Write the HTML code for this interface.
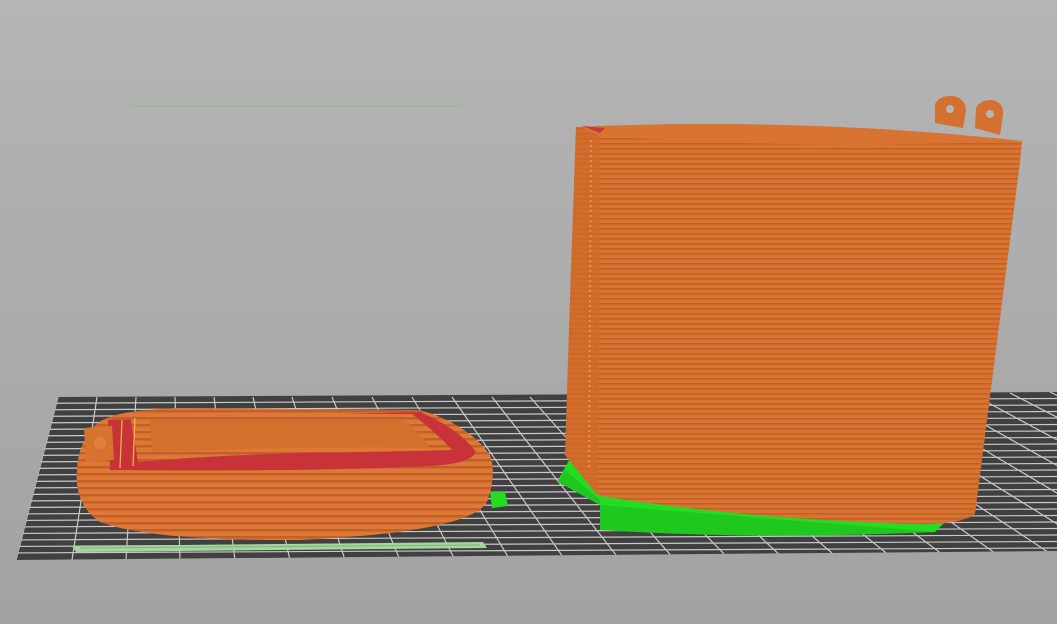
<!DOCTYPE html>
<html><head><style>html,body{margin:0;padding:0;width:1057px;height:624px;overflow:hidden;background:#aaa}</style></head>
<body>
<svg width="1057" height="624" viewBox="0 0 1057 624" xmlns="http://www.w3.org/2000/svg">
<defs>
<linearGradient id="bg" x1="0" y1="0" x2="0" y2="1">
<stop offset="0" stop-color="#b5b5b5"/><stop offset="1" stop-color="#a2a2a2"/></linearGradient>
<pattern id="st" width="10" height="5" patternUnits="userSpaceOnUse">
<rect width="10" height="5" fill="#d8742f"/><rect y="3" width="10" height="1.6" fill="#c2612a"/></pattern>
<pattern id="st2" width="10" height="7" patternUnits="userSpaceOnUse">
<rect width="10" height="7" fill="#de7834"/><rect y="4" width="10" height="2.5" fill="#c0602a"/></pattern>
<clipPath id="bedc"><path d="M58,397 L1057,392 L1057,551 L16,560 Z"/></clipPath>
</defs>
<rect width="1057" height="624" fill="url(#bg)"/>
<g clip-path="url(#bedc)">
<rect x="0" y="380" width="1057" height="190" fill="#404040"/>
<g stroke="#c9c9c9" stroke-width="1.2">
<line x1="0" y1="403.5" x2="1057" y2="398.5"/><line x1="0" y1="410" x2="1057" y2="405"/>
<line x1="0" y1="416.5" x2="1057" y2="411.5"/><line x1="0" y1="423" x2="1057" y2="418"/>
<line x1="0" y1="429.5" x2="1057" y2="424.5"/><line x1="0" y1="436" x2="1057" y2="431"/>
<line x1="0" y1="442.5" x2="1057" y2="437.5"/><line x1="0" y1="449" x2="1057" y2="444"/>
<line x1="0" y1="455.5" x2="1057" y2="450.5"/><line x1="0" y1="462" x2="1057" y2="457"/>
<line x1="0" y1="468.5" x2="1057" y2="463.5"/><line x1="0" y1="475" x2="1057" y2="470"/>
<line x1="0" y1="481.5" x2="1057" y2="476.5"/><line x1="0" y1="488" x2="1057" y2="483"/>
<line x1="0" y1="494.5" x2="1057" y2="489.5"/><line x1="0" y1="501" x2="1057" y2="496"/>
<line x1="0" y1="507.5" x2="1057" y2="502.5"/><line x1="0" y1="514" x2="1057" y2="509"/>
<line x1="0" y1="520.5" x2="1057" y2="515.5"/><line x1="0" y1="527" x2="1057" y2="522"/>
<line x1="0" y1="533.5" x2="1057" y2="528.5"/><line x1="0" y1="540" x2="1057" y2="535"/>
<line x1="0" y1="546.5" x2="1057" y2="541.5"/><line x1="0" y1="553" x2="1057" y2="548"/>
<line x1="58" y1="397" x2="16" y2="560"/>
<line x1="97" y1="397" x2="72" y2="560"/><line x1="136" y1="397" x2="126" y2="560"/>
<line x1="175" y1="397" x2="180" y2="560"/><line x1="214" y1="397" x2="235" y2="560"/>
<line x1="253" y1="397" x2="290" y2="560"/><line x1="292" y1="397" x2="345" y2="560"/>
<line x1="332" y1="397" x2="400" y2="560"/><line x1="372" y1="397" x2="455" y2="560"/>
<line x1="412" y1="397" x2="510" y2="560"/><line x1="452" y1="397" x2="565" y2="560"/>
<line x1="492" y1="397" x2="620" y2="560"/><line x1="530" y1="397" x2="675" y2="560"/>
<line x1="570" y1="397" x2="730" y2="560"/><line x1="610" y1="396" x2="785" y2="560"/>
<line x1="650" y1="396" x2="840" y2="560"/><line x1="690" y1="396" x2="895" y2="560"/>
<line x1="730" y1="396" x2="950" y2="560"/><line x1="770" y1="395" x2="1005" y2="560"/>
<line x1="810" y1="395" x2="1060" y2="560"/><line x1="850" y1="395" x2="1115" y2="560"/>
<line x1="890" y1="394" x2="1170" y2="560"/><line x1="930" y1="394" x2="1225" y2="560"/>
<line x1="970" y1="393" x2="1280" y2="560"/><line x1="1010" y1="393" x2="1335" y2="560"/>
<line x1="1050" y1="392" x2="1390" y2="560"/>
</g>
</g>
<line x1="131" y1="106" x2="462" y2="106" stroke="#8fbf8a" stroke-width="1.5"/>
<path d="M72,546 L483,542 L487,548 L76,552 Z" fill="#a6d6a0"/>
<path d="M80,548 L480,545" stroke="#7fb27a" stroke-width="1"/>
<!-- small object -->
<path d="M92,430 Q100,410 180,408 L420,410 Q468,424 490,455 Q497,475 487,502 Q470,532 300,540 Q150,541 100,522 Q74,505 77,470 Q78,445 92,430 Z" fill="url(#st2)"/>
<path d="M108,420 L420,412 Q458,428 476,452 Q470,464 430,466 Q300,472 110,470 Z" fill="#c8333a"/>
<path d="M130,414 L412,414 Q440,436 452,450 Q380,452 300,453 Q200,456 138,462 Z" fill="url(#st2)"/>
<path d="M150,420 L405,420 Q422,436 430,448 Q300,446 152,452 Z" fill="#d4702e"/>
<path d="M135,418 L133,466 M122,420 L120,468" stroke="#e6c040" stroke-width="1.2"/>
<path d="M84,428 L112,426 L114,460 L86,462 Z" fill="#d8732f"/>
<circle cx="100" cy="443" r="6" fill="#e08040"/>
<path d="M490,492 L505,492 L508,506 L492,508 Z" fill="#22dd22"/>
<!-- big object green base -->
<path d="M572,455 L558,480 L600,505 Q760,530 935,532 L945,522 L920,522 Q760,518 600,495 Z" fill="#22dd22"/>
<path d="M565,470 L600,500 L600,530 Q760,540 935,532 L600,505 L558,482 Z" fill="#1ec81e"/>
<!-- big object -->
<path d="M576,127 Q800,117 1022,141 L1020,162 L975,514 Q962,524 920,524 Q760,521 600,496 L565,455 L570,300 Z" fill="url(#st)"/>
<path d="M576,127 L600,135 L598,497 L565,455 L570,300 Z" fill="#d06a2a" opacity="0.7"/>
<path d="M591,140 L589,470" stroke="#e8914e" stroke-width="2" stroke-dasharray="2 3"/>
<path d="M580,127 Q800,117 1020,141 Q800,150 600,136 Z" fill="#d87332"/>
<path d="M582,126 L605,128 L600,133 Z" fill="#c83a3a"/>
<path d="M935,123 L935,104 Q940,95 953,96 Q965,98 966,110 L963,128 Z" fill="#d47030"/>
<circle cx="950" cy="109" r="4" fill="#b5b5b5"/>
<path d="M975,128 L976,108 Q980,100 992,100 Q1004,102 1003,115 L1000,135 Z" fill="#d47030"/>
<circle cx="990" cy="114" r="4" fill="#b5b5b5"/>
</svg>
</body></html>
